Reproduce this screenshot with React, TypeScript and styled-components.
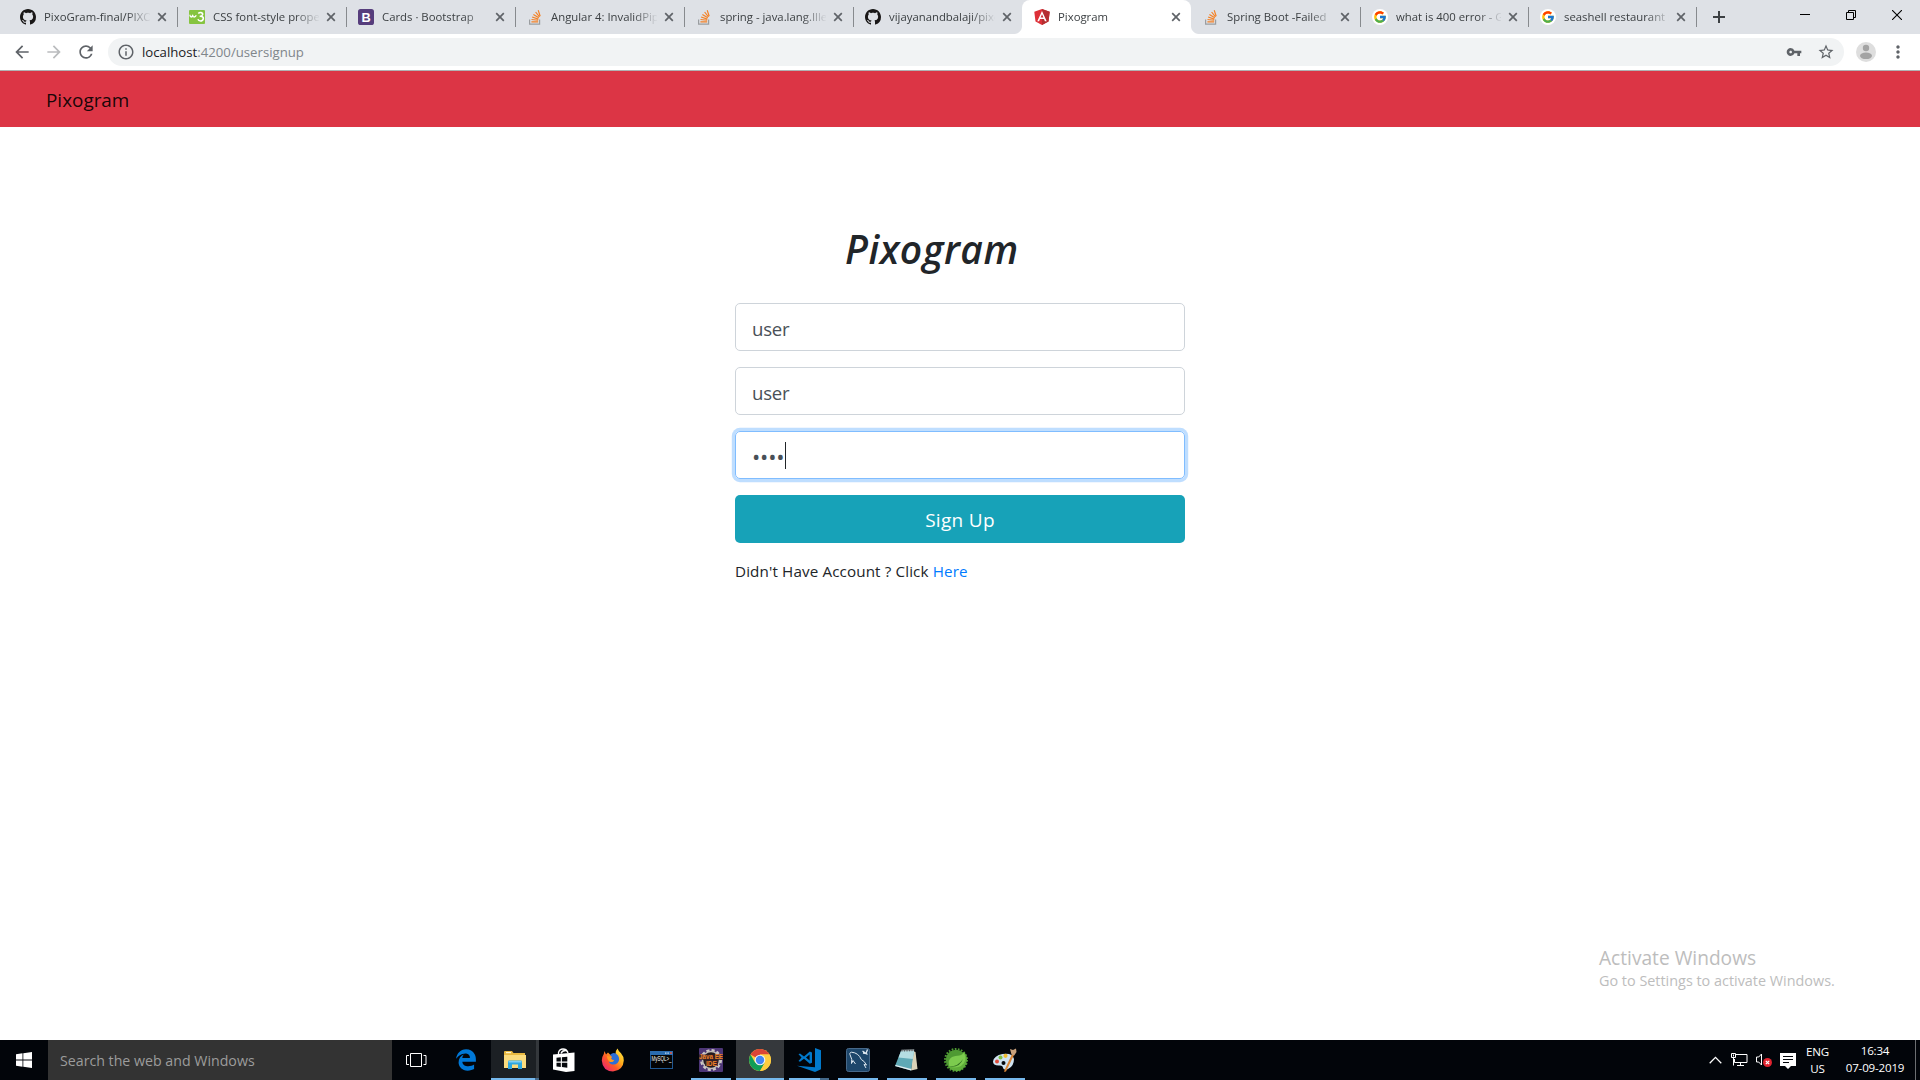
import React from 'react';
import styled, { createGlobalStyle, css } from 'styled-components';
import { FcGoogle } from 'react-icons/fc';
import { FaEdgeLegacy } from 'react-icons/fa';
import {
  MdArrowBack,
  MdArrowForward,
  MdRefresh,
  MdInfoOutline,
  MdVpnKey,
  MdStarBorder,
  MdMoreVert,
} from 'react-icons/md';

const Global = createGlobalStyle`
  * { box-sizing: border-box; }
  body {
    margin: 0;
    background: #fff;
    font-family: "Open Sans", "Noto Sans", sans-serif;
    overflow: hidden;
  }
`;

const Screen = styled.div`
  width: 1920px;
  height: 1080px;
  display: flex;
  flex-direction: column;
  position: relative;
  background: #fff;
`;

/* ---------- Tab strip ---------- */

const TabStrip = styled.div`
  height: 34px;
  flex: none;
  display: flex;
  background: #dee1e6;
  padding-left: 8px;
`;

const divider = css`
  background: linear-gradient(#878a8e, #878a8e) left 0 top 7px / 1px 20px no-repeat;
`;

const Tab = styled.div<{ $active?: boolean; $divider?: boolean; $w?: number }>`
  width: ${(p) => p.$w ?? 169}px;
  height: 34px;
  flex: none;
  display: flex;
  align-items: center;
  padding: 0 10px 0 12px;
  position: relative;
  ${(p) => p.$divider && divider}
  ${(p) =>
    p.$active &&
    css`
      background: #fff;
      border-radius: 8px 8px 0 0;
      &::before,
      &::after {
        content: '';
        position: absolute;
        bottom: 0;
        width: 8px;
        height: 8px;
      }
      &::before {
        left: -8px;
        background: radial-gradient(circle at 0 0, transparent 7.5px, #fff 8.5px);
      }
      &::after {
        right: -8px;
        background: radial-gradient(circle at 100% 0, transparent 7.5px, #fff 8.5px);
      }
    `}
`;

const Favicon = styled.span`
  width: 16px;
  height: 16px;
  flex: none;
  display: flex;
  svg { display: block; }
`;

const GoogleBadge = styled.span`
  width: 16px;
  height: 16px;
  border-radius: 50%;
  background: #fff;
  display: flex;
  align-items: center;
  justify-content: center;
`;

const TabTitle = styled.span`
  flex: 1;
  min-width: 0;
  margin-left: 8px;
  overflow: hidden;
  white-space: nowrap;
  font-size: 11.35px;
  line-height: 20px;
  color: #3c4043;
  mask-image: linear-gradient(to right, #000 82px, transparent 107px);
`;

const CloseIcon = styled.svg`
  margin-left: 7px;
  flex: none;
`;

const NewTab = styled.div`
  width: 46px;
  height: 34px;
  display: flex;
  align-items: center;
  justify-content: center;
  ${divider}
`;

const WindowControls = styled.div`
  margin-left: auto;
  display: flex;
`;

const Control = styled.div`
  width: 46px;
  height: 29px;
  display: flex;
  align-items: center;
  justify-content: center;
`;

/* ---------- Toolbar ---------- */

const Toolbar = styled.div`
  height: 37px;
  flex: none;
  display: flex;
  align-items: center;
  background: #fff;
  border-bottom: 1px solid #b1b2b3;
  padding: 0 12px 0 12px;
  color: #5f6368;
`;

const NavButtons = styled.div`
  display: flex;
  gap: 12px;
  width: 96px;
  svg:nth-child(2) { color: #babcbe; }
`;

const Omnibox = styled.div`
  width: 1736px;
  height: 28px;
  border-radius: 14px;
  background: #f1f3f4;
  display: flex;
  align-items: center;
  padding: 0 9px 0 9px;
`;

const Url = styled.span`
  flex: 1;
  margin-left: 7px;
  font-size: 13.2px;
  line-height: 20px;
  color: #80868b;
  b { font-weight: 400; color: #202124; }
`;

const OmniActions = styled.span`
  display: flex;
  gap: 15px;
  align-items: center;
`;

const Avatar = styled.svg`
  margin-left: 12px;
`;

const MenuButton = styled.span`
  display: flex;
  margin-left: 12px;
`;

/* ---------- Page ---------- */

const Navbar = styled.nav`
  height: 56px;
  flex: none;
  background: #dc3545;
  display: flex;
  align-items: center;
  padding: 1px 0 0 46px;
`;

const Brand = styled.a`
  font-size: 18.9px;
  line-height: 30px;
  color: rgba(0, 0, 0, 0.9);
`;

const Page = styled.main`
  flex: 1;
  display: flex;
  flex-direction: column;
  align-items: center;
  padding-top: 96px;
`;

const Form = styled.form`
  width: 450px;
  display: flex;
  flex-direction: column;
`;

const Title = styled.h1`
  margin: 0 0 32px;
  padding-left: 110px;
  height: 48px;
  font-size: 39px;
  line-height: 52px;
  font-weight: 600;
  font-style: italic;
  letter-spacing: 0.5px;
  color: #212529;
`;

const Field = styled.div<{ $focus?: boolean }>`
  height: 48px;
  margin-bottom: 16px;
  border: 1px solid ${(p) => (p.$focus ? '#80bdff' : '#ced4da')};
  border-radius: 5px;
  box-shadow: ${(p) => (p.$focus ? '0 0 0 3.2px rgba(0, 123, 255, 0.25)' : 'none')};
  display: flex;
  align-items: center;
  padding: ${(p) => (p.$focus ? '0' : '4px')} 16px 0;
  font-size: 18.6px;
  line-height: 28px;
  letter-spacing: -0.2px;
  color: #495057;
`;

const Dots = styled.span`
  font-size: 22px;
  letter-spacing: -0.15px;
  height: 28px;
  line-height: 31px;
`;

const Caret = styled.span`
  width: 1px;
  height: 27px;
  background: #212529;
`;

const Submit = styled.div`
  height: 48px;
  border-radius: 5px;
  background: #17a2b8;
  color: #fff;
  display: flex;
  align-items: center;
  justify-content: center;
  padding-top: 2px;
  font-size: 19px;
  letter-spacing: 0.3px;
`;

const Hint = styled.p`
  margin: 16px 0 0;
  font-size: 15.2px;
  line-height: 24px;
  letter-spacing: 0.13px;
  color: #212529;
  a { color: #007bff; }
`;

const Watermark = styled.div`
  position: absolute;
  left: 1599px;
  top: 944px;
  color: #bdbdbd;
  white-space: nowrap;
`;

const WatermarkTitle = styled.div`
  font-size: 19.15px;
  line-height: 28px;
`;

const WatermarkText = styled.div`
  font-size: 14.4px;
  line-height: 17px;
`;

/* ---------- Taskbar ---------- */

const Taskbar = styled.footer`
  height: 40px;
  flex: none;
  display: flex;
  background: #02050a;
`;

const Start = styled.div`
  width: 48px;
  display: flex;
  align-items: center;
  justify-content: center;
`;

const Search = styled.div`
  width: 344px;
  background: #333;
  color: #9c9c9c;
  font-size: 14.2px;
  line-height: 40px;
  padding: 1px 0 0 12px;
`;

const TaskSlot = styled.div`
  width: 49px;
  height: 40px;
  padding-left: 1px;
  display: flex;
`;

type TaskState = 'open' | 'active' | 'group' | 'opengroup';

const taskBackground: Record<TaskState, string> = {
  open: 'transparent',
  opengroup: 'transparent',
  active: '#35383c',
  group: 'linear-gradient(to right, #1c2024 45px, #34383c 45px)',
};

const taskUnderline: Record<TaskState, string> = {
  open: '#76b9ed',
  opengroup: 'linear-gradient(to right, #76b9ed 31px, #44698a 31px)',
  active: '#76b9ed',
  group: 'linear-gradient(to right, #76b9ed 44px, #44698a 44px)',
};

const TaskButton = styled.div<{ $state?: TaskState }>`
  position: relative;
  flex: 1;
  display: flex;
  align-items: center;
  justify-content: center;
  padding-right: 1px;
  background: ${(p) => (p.$state ? taskBackground[p.$state] : 'transparent')};
  &::after {
    content: '';
    position: absolute;
    bottom: 0;
    height: 2px;
    left: ${(p) => (p.$state === 'open' || p.$state === 'opengroup' ? 4 : 0)}px;
    right: ${(p) => (p.$state === 'open' || p.$state === 'opengroup' ? 4 : 0)}px;
    background: ${(p) => (p.$state ? taskUnderline[p.$state] : 'none')};
  }
`;

const Tray = styled.div`
  margin-left: auto;
  display: flex;
  align-items: center;
  color: #fff;
`;

const TrayIcon = styled.svg<{ $gap: number }>`
  margin-right: ${(p) => p.$gap}px;
`;

const TrayText = styled.div<{ $w: number; $clock?: boolean }>`
  width: ${(p) => p.$w}px;
  text-align: center;
  font-size: 11.6px;
  line-height: 17px;
  letter-spacing: -0.2px;
  white-space: pre-line;
  ${(p) => p.$clock && css`
    padding-left: 1px;
    margin-bottom: 2px;
  `}
`;

const ShowDesktop = styled.div`
  width: 5px;
  height: 40px;
  border-left: 1px solid #6c6e71;
`;

/* ---------- Drawings ---------- */

const StackIcon = () => (
  <svg width="16" height="16" viewBox="0 0 16 16" fill="none">
    <path d="M2.6 10.5v4.7h10v-4.7" stroke="#9a9da0" strokeWidth="1.2" />
    <path
      d="M4.4 12.9h6.8M4.5 10.5l6.7.8M5.1 8l6.3 2.1M6.4 5.4l5.4 3.4M8.6 3l3.9 4.9M11.2 1.2l2 6"
      stroke="#f48024"
      strokeWidth="1.15"
    />
  </svg>
);

const W3Icon = () => (
  <svg width="16" height="16" viewBox="0 0 16 16" fill="none" stroke="#fff" strokeLinejoin="round">
    <rect y="1" width="16" height="14" rx="1" fill="#86c440" stroke="none" />
    <path d="M.9 5.8Q1.1 8 2.3 8 3.5 7.8 3.7 6.2 3.9 8 5.1 8 6.6 7.8 7.2 6.2" strokeWidth="1.3" />
    <path d="M9.3 4.6Q10.3 3.4 12 3.6 14 4 13.6 5.6 13.2 7 11.3 7.2 14.5 7.4 14.3 9.8 13.8 12 11.5 12 9.6 11.9 8.9 10.3" strokeWidth="1.6" />
  </svg>
);

const BootstrapIcon = () => (
  <svg width="16" height="16" viewBox="0 0 16 16">
    <rect width="16" height="16" rx="2.6" fill="#563d7c" />
    <text x="8" y="12.6" textAnchor="middle" fontFamily="Liberation Sans, sans-serif" fontWeight="700" fontSize="12.8" fill="#fff">B</text>
  </svg>
);

const AngularIcon = () => (
  <svg width="16" height="16" viewBox="0 0 16 16">
    <path d="M8 0l7.7 2.7-1.2 9.8L8 16l-6.5-3.5L.3 2.7z" fill="#dd3038" />
    <path d="M8 0l7.7 2.7-1.2 9.8L8 16z" fill="#b52e31" />
    <path d="M8 1.9L3.3 12.3h1.8l.9-2.4h4l.9 2.4h1.8zM8 5.2l1.4 3.3H6.6z" fill="#fff" fillRule="evenodd" />
  </svg>
);

const GoogleIcon = () => (
  <GoogleBadge>
    <FcGoogle size={14} />
  </GoogleBadge>
);

const GithubIcon = () => (
  <svg width="16" height="16" viewBox="0 0 16 16">
    <path
      fill="#191717"
      d="M8 0C3.58 0 0 3.58 0 8c0 3.54 2.29 6.53 5.47 7.59.4.07.55-.17.55-.38 0-.19-.01-.82-.01-1.49-2.01.37-2.53-.49-2.69-.94-.09-.23-.48-.94-.82-1.13-.28-.15-.68-.52-.01-.53.63-.01 1.08.58 1.23.82.72 1.21 1.87.87 2.33.66.07-.52.28-.87.51-1.07-1.78-.2-3.64-.89-3.64-3.95 0-.87.31-1.59.82-2.15-.08-.2-.36-1.02.08-2.12 0 0 .67-.21 2.2.82.64-.18 1.32-.27 2-.27s1.36.09 2 .27c1.53-1.04 2.2-.82 2.2-.82.44 1.1.16 1.92.08 2.12.51.56.82 1.27.82 2.15 0 3.07-1.87 3.75-3.65 3.95.29.25.54.73.54 1.48 0 1.07-.01 1.93-.01 2.2 0 .21.15.46.55.38A8.01 8.01 0 0 0 16 8c0-4.42-3.58-8-8-8z"
    />
  </svg>
);

const Close = () => (
  <CloseIcon width="10" height="10" viewBox="0 0 10 10">
    <path d="M1.2 1.2l7.6 7.6M8.8 1.2L1.2 8.8" stroke="#5f6368" strokeWidth="1.7" />
  </CloseIcon>
);

const WindowsIcon = () => (
  <svg width="16" height="16" viewBox="0 0 16 16" fill="#fff">
    <path d="M0 2.2L6.5 1.3v6.2H0zM7.3 1.2L16 0v7.5H7.3zM0 8.4h6.5v6.3L0 13.8zM7.3 8.4H16V16l-8.7-1.2z" />
  </svg>
);

const TaskViewIcon = () => (
  <svg width="21" height="15" viewBox="0 0 21 15" fill="none" stroke="#fff">
    <path d="M4.5 .5h11v13h-11zM3 2.5H.5v9H3M17.5 2.5H20v9h-2.5" />
  </svg>
);

const ExplorerIcon = () => (
  <svg width="22" height="18" viewBox="0 0 22 18">
    <path d="M0 1q0-1 1-1h7l1.5 2H21v4H0z" fill="#e9b940" />
    <path d="M2 1h5v1.2H2z" fill="#fff6cf" />
    <path d="M0 4h22v13H0z" fill="#fbdc7e" />
    <path d="M4 18V10.5q0-1 1-1h12q1 0 1 1V18h-4v-4.5H8V18z" fill="#2fa8e0" />
    <path d="M4.5 10h13v1.5h-13z" fill="#7fd0f5" />
  </svg>
);

const StoreIcon = () => (
  <svg width="22" height="24" viewBox="0 0 22 24">
    <path d="M5.5 6V4.5Q6.5 1 10 1q3.5 0 4.5 3M8 5.5Q9 2.5 12.5 2.5q2 0 2.5 2.5" fill="none" stroke="#fff" strokeWidth="1.3" />
    <path d="M0 6.5L21.5 4.5V23L13 24 0 21.5z" fill="#fff" />
    <path d="M3.5 9.7l4.3-.4v4.3H3.5zM8.9 9.2l5.4-.5v4.9H8.9zM3.5 14.7h4.3V19l-4.3-.5zM8.9 14.7h5.4v5l-5.4-.6z" fill="#05080c" />
  </svg>
);

const FirefoxIcon = () => (
  <svg width="24" height="24" viewBox="0 0 24 24">
    <defs>
      <linearGradient id="ff" x1="1" y1="0" x2="0" y2="1">
        <stop offset="0" stopColor="#fff44f" />
        <stop offset=".35" stopColor="#ffb21d" />
        <stop offset=".6" stopColor="#ff5a26" />
        <stop offset="1" stopColor="#e5148c" />
      </linearGradient>
    </defs>
    <path d="M3.5 3l1.5 3.5L7 4.5 9.5 7l5-1Q14.5 2.5 16.5 .5q1 2.8 3.5 4.7 2.8 3 2.8 7.3-.6 10-10.8 11Q1.5 23 .8 12.5 1 8.5 2.8 6z" fill="url(#ff)" />
    <path d="M9 7q4-4 8 .5 2.5 4-.5 7.5-3 2.7-6.7.9-2-1.2-1.8-3 3 1.8 5.3-.9-2.3 0-3.2-1.6L11 9z" fill="#2c6fd6" />
    <path d="M6 8l4.5.8-.7 2q1 1.6 3.4 1.6-2 2.6-5 1-2.4-2-2.2-5.4z" fill="#ff9a1f" />
  </svg>
);

const MysqlIcon = () => (
  <svg width="23" height="18" viewBox="0 0 23 18">
    <rect x=".5" y=".5" width="22" height="17" fill="#020304" stroke="#1f568f" />
    <path d="M0 0h23v4H0z" fill="#2a6cb0" />
    <path d="M15 1.5h1.5v1.2H15zM17.4 1.5h1.5v1.2h-1.5z" fill="#c9dbec" />
    <path d="M20 1.2h2v1.6h-2z" fill="#e4573d" />
    <text x="1.5" y="10.3" fontFamily="Liberation Sans, sans-serif" fontSize="6.3" textLength="20" lengthAdjust="spacingAndGlyphs" fill="#fff">MySQL&gt;_</text>
  </svg>
);

const JavaIcon = () => (
  <svg width="24" height="24" viewBox="0 0 24 24">
    <rect width="24" height="24" rx="1" fill="#4d3677" />
    <circle cx="12" cy="12" r="9.5" fill="none" stroke="#cdc8c5" strokeWidth="3" strokeDasharray="3 2" />
    <circle cx="12" cy="12" r="8.5" fill="#211a20" stroke="#c2bdb9" strokeWidth="1.5" />
    <path d="M0 6.5h24V12H0zM6 12h13v6H6z" fill="#3a2226" opacity=".8" />
    <text x="0" y="11.3" fontFamily="Liberation Sans, sans-serif" fontSize="6.5" fontWeight="700" textLength="24" lengthAdjust="spacingAndGlyphs" fill="#f08328">Java EE</text>
    <text x="7" y="17.6" fontFamily="Liberation Sans, sans-serif" fontSize="7.5" fontWeight="700" textLength="11" lengthAdjust="spacingAndGlyphs" fill="#f08328">IDE</text>
  </svg>
);

const ChromeIcon = () => (
  <svg width="22" height="22" viewBox="0 0 22 22">
    <circle cx="11" cy="11" r="11" fill="#ffcd40" />
    <path d="M11 11L1.5 5.5A11 11 0 0 1 20.5 5.5H11z" fill="#db4437" />
    <path d="M1.5 5.5A11 11 0 0 0 11 22L15.8 13.8 11 11 6.2 13.7z" fill="#0f9d58" />
    <path d="M11 5.5h9.5A11 11 0 0 1 11 22l4.8-8.2z" fill="#ffcd40" />
    <circle cx="11" cy="11" r="5.3" fill="#f3f3f3" />
    <circle cx="11" cy="11" r="4.2" fill="#4285f4" />
  </svg>
);

const CodeIcon = () => (
  <svg width="24" height="24" viewBox="0 0 24 24">
    <path d="M18 0l6 2.3v19L18 24 0 17.8l18 1.4z" fill="#0179cb" />
    <path d="M1.5 6.2L3 5.4l4 3.1 5.8-5.1 2.2 1v10.4l-2.2 1L7 10.7l-4 3.1-1.5-.8 3-3.4zM12.6 6.6L9 9.6l3.6 2.9z" fill="#0179cb" fillRule="evenodd" />
  </svg>
);

const WorkbenchIcon = () => (
  <svg width="24" height="24" viewBox="0 0 24 24" fill="none" stroke="#dfe9f1">
    <rect x=".5" y=".5" width="23" height="23" rx="2" fill="#1e476b" stroke="#47698a" />
    <path d="M5.5 15.5Q6.5 11 4.5 8 2.8 4.5 5.5 4.2q7 .5 9.8 7.3 3.2 1.5 5.2 5.5l-2.5-.5 2 3.5" />
    <path d="M5.5 15.5l1.5-3L9.500 16" />
    <path d="M16.5 3l5 3.5M21.5 1.5l-1.500 4-3-.5" strokeWidth="1.3" />
  </svg>
);

const NotepadIcon = () => (
  <svg width="23" height="22" viewBox="0 0 23 22">
    <path d="M18 2l2.5 1L22.5 20 16 21.5z" fill="#d9d2b8" />
    <path d="M6 2h13l-3 19.5L0 17z" fill="#5fa9b6" />
    <path d="M6 2h13l-1.2 8L3.5 8.5z" fill="#b5dde2" />
    <path d="M0 17l16 4.5.3-1.5L.8 15.9z" fill="#e4eef0" />
    <path d="M6 2.3l13-.3.3-1.8L6.5.8z" fill="#9aa3a6" />
    <path d="M7 .5v2M9.5 .5v2M12 .5v2M14.5 .3v2M17 .2v2" stroke="#4b5356" strokeWidth=".8" />
  </svg>
);

const SpringIcon = () => (
  <svg width="24" height="24" viewBox="0 0 24 24">
    <circle cx="12" cy="12" r="11" fill="none" stroke="#4f9a33" strokeWidth="2" strokeDasharray="1.7 1.44" />
    <circle cx="12" cy="12" r="10.3" fill="#4f9a33" />
    <path d="M20.5 4q2.5 3.5 2.5 8-.8 9-9 11-5 .3-8.5-2.5l-1-4.5z" fill="#5fae3a" />
    <path d="M20 4.5q4 9-3 13.5-5 2.5-11.5.5-2.5-6.5 2.5-9.5 3-1.5 7.5-1.5 3-.5 4.5-3z" fill="#7ccb4e" />
    <path d="M4.5 18.5q9.5.5 14.5-7.5-3.5 9.5-14.5 7.5z" fill="#2f6d1f" />
  </svg>
);

const PaintIcon = () => (
  <svg width="24" height="24" viewBox="0 0 24 24">
    <path d="M9.5 6q10-1.5 11.5 5 0 7.5-6 10-4 1.5-5-1 0-2.5-3-2.5Q0 18 0 13.5 1 7.5 9.5 6z" fill="#cfe3f2" />
    <circle cx="10.5" cy="15" r="2" fill="#05080c" />
    <circle cx="4" cy="13.5" r="2" fill="#dd4c3c" />
    <circle cx="7.5" cy="9.5" r="2" fill="#7ebf45" />
    <circle cx="12.5" cy="7.8" r="2.1" fill="#f0bd31" />
    <path d="M19 6l2 1-8 16.5-1.8.5.3-2z" fill="#d98638" />
    <path d="M17 1l3 1 3-1.5.5 3.5-2.3 3.5-2.7-1z" fill="#c9a27c" />
  </svg>
);

/* ---------- Data ---------- */

type TabItem = { title: string; icon: React.ReactNode; active?: boolean; divider?: boolean; w?: number };

const tabs: TabItem[] = [
  { title: 'PixoGram-final/PIXO', icon: <GithubIcon /> },
  { title: 'CSS font-style prope', icon: <W3Icon />, divider: true },
  { title: 'Cards · Bootstrap', icon: <BootstrapIcon />, divider: true },
  { title: 'Angular 4: InvalidPip', icon: <StackIcon />, divider: true },
  { title: 'spring - java.lang.Ille', icon: <StackIcon />, divider: true },
  { title: 'vijayanandbalaji/pixo', icon: <GithubIcon />, divider: true },
  { title: 'Pixogram', icon: <AngularIcon />, active: true },
  { title: 'Spring Boot -Failed', icon: <StackIcon /> },
  { title: 'what is 400 error - G', icon: <GoogleIcon />, divider: true, w: 168 },
  { title: 'seashell restaurant n', icon: <GoogleIcon />, divider: true, w: 168 },
];

const tasks: { name: string; icon: React.ReactNode; state?: TaskState }[] = [
  { name: 'taskview', icon: <TaskViewIcon /> },
  { name: 'edge', icon: <FaEdgeLegacy size={22} color="#0078d7" /> },
  { name: 'explorer', icon: <ExplorerIcon />, state: 'group' },
  { name: 'store', icon: <StoreIcon /> },
  { name: 'firefox', icon: <FirefoxIcon /> },
  { name: 'mysql', icon: <MysqlIcon /> },
  { name: 'java', icon: <JavaIcon />, state: 'open' },
  { name: 'chrome', icon: <ChromeIcon />, state: 'active' },
  { name: 'code', icon: <CodeIcon />, state: 'opengroup' },
  { name: 'workbench', icon: <WorkbenchIcon />, state: 'open' },
  { name: 'notepad', icon: <NotepadIcon />, state: 'open' },
  { name: 'spring', icon: <SpringIcon />, state: 'open' },
  { name: 'paint', icon: <PaintIcon />, state: 'open' },
];

export default function App() {
  return (
    <Screen>
      <Global />
      <TabStrip>
        {tabs.map((t) => (
          <Tab key={t.title} $active={t.active} $divider={t.divider} $w={t.w}>
            <Favicon>{t.icon}</Favicon>
            <TabTitle>{t.title}</TabTitle>
            <Close />
          </Tab>
        ))}
        <NewTab>
          <svg width="12" height="12" viewBox="0 0 12 12">
            <path d="M6 0v12M0 6h12" stroke="#3c4043" strokeWidth="2" />
          </svg>
        </NewTab>
        <WindowControls>
          <Control>
            <svg width="10" height="10"><path d="M0 4.5h10" stroke="#000" /></svg>
          </Control>
          <Control>
            <svg width="10" height="10" fill="none" stroke="#000">
              <path d="M.5 2.5h7v7h-7zM2.5 2.5v-2h7v7h-2" />
            </svg>
          </Control>
          <Control>
            <svg width="10" height="10"><path d="M0 0l10 10M10 0L0 10" stroke="#000" strokeWidth="1.1" /></svg>
          </Control>
        </WindowControls>
      </TabStrip>

      <Toolbar>
        <NavButtons>
          <MdArrowBack size={20} />
          <MdArrowForward size={20} />
          <MdRefresh size={20} />
        </NavButtons>
        <Omnibox>
          <MdInfoOutline size={18} />
          <Url><b>localhost</b>:4200/usersignup</Url>
          <OmniActions>
            <MdVpnKey size={16} />
            <MdStarBorder size={18} />
          </OmniActions>
        </Omnibox>
        <Avatar width="20" height="20" viewBox="0 0 20 20">
          <circle cx="10" cy="10" r="10" fill="#dedede" />
          <circle cx="10" cy="6" r="3.2" fill="#a3a3a3" />
          <ellipse cx="10" cy="13.8" rx="6" ry="3.3" fill="#a3a3a3" />
        </Avatar>
        <MenuButton><MdMoreVert size={20} /></MenuButton>
      </Toolbar>

      <Navbar><Brand>Pixogram</Brand></Navbar>

      <Page>
        <Form>
          <Title>Pixogram</Title>
          <Field>user</Field>
          <Field>user</Field>
          <Field $focus><Dots>••••</Dots><Caret /></Field>
          <Submit>Sign Up</Submit>
          <Hint>Didn't Have Account ? Click <a>Here</a></Hint>
        </Form>
      </Page>

      <Watermark>
        <WatermarkTitle>Activate Windows</WatermarkTitle>
        <WatermarkText>Go to Settings to activate Windows.</WatermarkText>
      </Watermark>

      <Taskbar>
        <Start><WindowsIcon /></Start>
        <Search>Search the web and Windows</Search>
        {tasks.map((t) => (
          <TaskSlot key={t.name}>
            <TaskButton $state={t.state}>{t.icon}</TaskButton>
          </TaskSlot>
        ))}
        <Tray>
          <TrayIcon $gap={9} width="13" height="8" fill="none">
            <path d="M.7 7.2L6.5 1.4l5.8 5.8" stroke="#fff" strokeWidth="1.3" />
          </TrayIcon>
          <TrayIcon $gap={8} width="17" height="14" fill="none" stroke="#fff">
            <path d="M5 1.5h11v8H3.5V6M9.5 9.5v3M6 12.5h7M.5 .5h4v4h-4zM2.5 4.5v8M2.5 1.5v2" />
          </TrayIcon>
          <TrayIcon $gap={8} width="16" height="14" viewBox="0 0 16 14">
            <path d="M.5 4h2.2L5.5 1v11L2.7 9H.5z" fill="none" stroke="#fff" />
            <circle cx="11.5" cy="9.5" r="4.5" fill="#e0232f" />
            <path d="M9.8 7.8l3.4 3.4M13.2 7.8l-3.4 3.4" stroke="#fff" strokeWidth="1.2" />
          </TrayIcon>
          <TrayIcon $gap={5} width="16" height="17" viewBox="0 0 16 17">
            <path d="M0 1h16v13h-5l-3 3-3-3H0z" fill="#fff" />
            <path d="M3 4.5h10M3 7.5h10M3 10.5h6" stroke="#02050a" />
          </TrayIcon>
          <TrayText $w={33}>{'ENG\nUS'}</TrayText>
          <TrayText $w={81} $clock>{'16:34\n07-09-2019'}</TrayText>
          <ShowDesktop />
        </Tray>
      </Taskbar>
    </Screen>
  );
}
